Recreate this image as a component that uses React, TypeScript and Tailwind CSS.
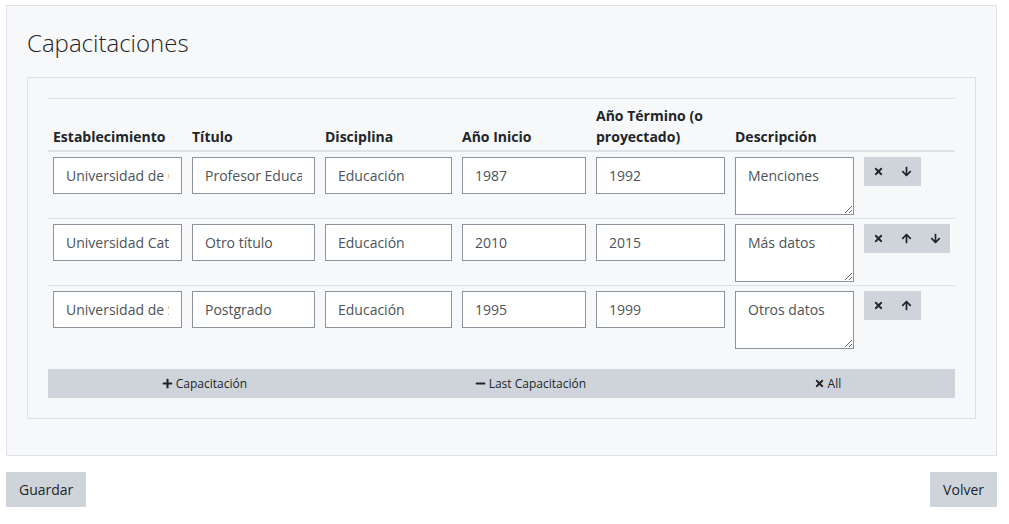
import { FaTimes, FaArrowUp, FaArrowDown, FaPlus, FaMinus } from 'react-icons/fa';

type Capacitacion = {
  establecimiento: string;
  titulo: string;
  disciplina: string;
  inicio: string;
  termino: string;
  descripcion: string;
};

const capacitaciones: Capacitacion[] = [
  {
    establecimiento: 'Universidad de Chile',
    titulo: 'Profesor Educación Básica',
    disciplina: 'Educación',
    inicio: '1987',
    termino: '1992',
    descripcion: 'Menciones',
  },
  {
    establecimiento: 'Universidad Católica',
    titulo: 'Otro título',
    disciplina: 'Educación',
    inicio: '2010',
    termino: '2015',
    descripcion: 'Más datos',
  },
  {
    establecimiento: 'Universidad de Santiago',
    titulo: 'Postgrado',
    disciplina: 'Educación',
    inicio: '1995',
    termino: '1999',
    descripcion: 'Otros datos',
  },
];

const inputClass =
  'w-full h-[37px] border border-[#8d939c] bg-white px-3 text-[14px] text-[#4d5359] outline-none';

const thClass = 'px-[5px] pt-[6px] pb-[3px] text-left align-bottom text-[14px] font-bold leading-[21px]';
const tdClass = 'px-[5px] pt-[5px] pb-[3px] align-top';

const App = () => {
  return (
    <div className="min-h-[524px] bg-white pt-[5px] pl-[6px] pr-[12px] text-[#212529] [font-family:'Open_Sans',sans-serif]">
      <div className="border border-[#dee2e6] bg-[#f7f8fa] px-[20px] pt-[22px] pb-[36px]">
        <h2 className="text-[24px] font-light leading-[30px] text-[#212529] mb-[19px]">Capacitaciones</h2>
        <div className="border border-[#dee2e6] p-[20px]">
          <table className="w-full table-fixed border-collapse">
            <colgroup>
              <col className="w-[139px]" />
              <col className="w-[133px]" />
              <col className="w-[137px]" />
              <col className="w-[134px]" />
              <col className="w-[139px]" />
              <col className="w-[129px]" />
              <col />
            </colgroup>
            <thead>
              <tr className="border-t border-[#dee2e6] border-b-2">
                <th className={thClass}>Establecimiento</th>
                <th className={thClass}>Título</th>
                <th className={thClass}>Disciplina</th>
                <th className={thClass}>Año Inicio</th>
                <th className={thClass}>
                  Año Término (o
                  <br />
                  proyectado)
                </th>
                <th className={thClass}>Descripción</th>
                <th className="p-[5px]" />
              </tr>
            </thead>
            <tbody>
              {capacitaciones.map((value, idx) => (
                <tr key={idx} className="border-t border-[#dee2e6] first:border-t-0">
                  <td className={tdClass}>
                    <input className={inputClass} defaultValue={value.establecimiento} />
                  </td>
                  <td className={tdClass}>
                    <input className={inputClass} defaultValue={value.titulo} />
                  </td>
                  <td className={tdClass}>
                    <input className={inputClass} defaultValue={value.disciplina} />
                  </td>
                  <td className={tdClass}>
                    <input className={inputClass} defaultValue={value.inicio} />
                  </td>
                  <td className={tdClass}>
                    <input className={inputClass} defaultValue={value.termino} />
                  </td>
                  <td className={tdClass}>
                    <textarea
                      className="block w-full h-[58px] border border-[#8d939c] bg-white px-3 py-[7px] text-[14px] leading-[21px] text-[#4d5359] outline-none"
                      defaultValue={value.descripcion}
                    />
                  </td>
                  <td className={tdClass}>
                    <div className="inline-flex h-[29px] bg-[#ced4da]">
                      <button className="flex w-[28.5px] items-center justify-center text-[#212529]">
                        <FaTimes size={11} />
                      </button>
                      {idx > 0 && (
                        <button className="flex w-[28.5px] items-center justify-center text-[#212529]">
                          <FaArrowUp size={11} />
                        </button>
                      )}
                      {idx < capacitaciones.length - 1 && (
                        <button className="flex w-[28.5px] items-center justify-center text-[#212529]">
                          <FaArrowDown size={11} />
                        </button>
                      )}
                    </div>
                  </td>
                </tr>
              ))}
            </tbody>
          </table>
          <div className="mt-[17px] flex h-[29px] items-center justify-around bg-[#ced4da] text-[12px] text-[#212529]">
            <button className="flex items-center gap-[3px]">
              <FaPlus size={11} />
              Capacitación
            </button>
            <button className="flex items-center gap-[3px]">
              <FaMinus size={11} />
              Last Capacitación
            </button>
            <button className="flex items-center gap-[3px]">
              <FaTimes size={11} />
              All
            </button>
          </div>
        </div>
      </div>
      <div className="mt-[16px] flex justify-between">
        <button className="h-[35px] bg-[#ced4da] px-[13px] text-[14px] text-[#212529]">Guardar</button>
        <button className="h-[35px] bg-[#ced4da] px-[13px] text-[14px] text-[#212529]">Volver</button>
      </div>
    </div>
  );
};

export default App;
